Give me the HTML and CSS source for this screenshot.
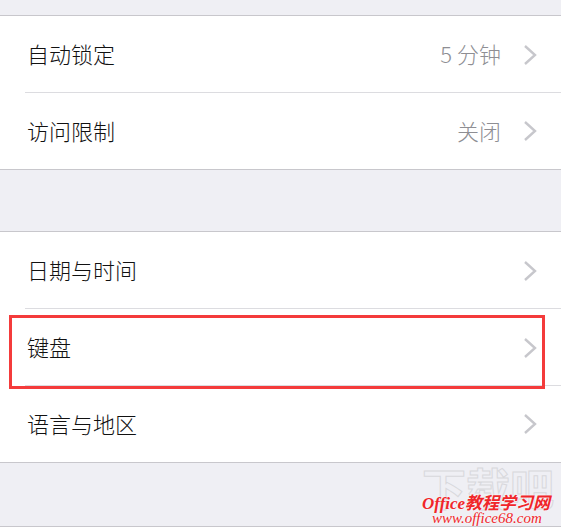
FILE: index.html
```html
<!DOCTYPE html>
<html lang="zh-CN">

<head>
    <meta charset="UTF-8">
    <meta name="viewport" content="width=device-width, initial-scale=1.0">
    <title>通用</title>

    <link rel="stylesheet" href="styles.css">
</head>

<body>

    <!-- First group -->
    <div class="group group-first">
        <div class="row">
            <span class="label">自动锁定</span>
            <span class="value">5 分钟</span>
            <svg class="chevron" width="14" height="22" viewBox="0 0 14 22"><polyline points="2,2 12,11 2,20" /></svg>
        </div>
        <div class="row">
            <span class="label">访问限制</span>
            <span class="value">关闭</span>
            <svg class="chevron" width="14" height="22" viewBox="0 0 14 22"><polyline points="2,2 12,11 2,20" /></svg>
        </div>
    </div>

    <!-- Second group -->
    <div class="group group-second">
        <div class="row">
            <span class="label">日期与时间</span>
            <svg class="chevron" width="14" height="22" viewBox="0 0 14 22"><polyline points="2,2 12,11 2,20" /></svg>
        </div>
        <div class="row highlighted">
            <span class="label">键盘</span>
            <svg class="chevron" width="14" height="22" viewBox="0 0 14 22"><polyline points="2,2 12,11 2,20" /></svg>
        </div>
        <div class="row">
            <span class="label">语言与地区</span>
            <svg class="chevron" width="14" height="22" viewBox="0 0 14 22"><polyline points="2,2 12,11 2,20" /></svg>
        </div>
    </div>

    <div class="group group-third"></div>

    <!-- Watermark -->
    <div class="watermark">
        <div class="wm-big">下载吧</div>
        <div class="wm-name">Office教程学习网</div>
        <div class="wm-url">www.office68.com</div>
    </div>

</body>

</html>
```

FILE: styles.css
```css
*, *::before, *::after {
    margin: 0;
    padding: 0;
    box-sizing: border-box;
}

html, body {
    width: 100%;
    height: 100%;
    overflow: hidden;
}

body {
    position: relative;
    background-color: #efeff4;
    font-family: "Noto Sans CJK SC", "Liberation Sans", sans-serif;
}

/* Groups */
.group {
    background-color: #ffffff;
    border-top: 1px solid #c8c7cc;
    border-bottom: 1px solid #c8c7cc;
}

.group-first {
    margin-top: 15px;
}

.group-second {
    margin-top: 61px;
}

.group-third {
    margin-top: 63px;
    height: 20px;
    border-bottom: none;
}

/* Rows */
.row {
    position: relative;
    height: 77px;
    display: flex;
    align-items: center;
    padding: 0 24px 0 27px;
}

.row:not(:last-child)::after {
    content: "";
    position: absolute;
    left: 25px;
    right: 0;
    bottom: 0;
    height: 1px;
    background-color: #dcdce0;
}

.row:last-child {
    height: 76px;
}

.label {
    flex: 1;
    font-size: 22px;
    font-weight: 300;
    line-height: 1;
    color: #111111;
    margin-top: -3px;
}

.value {
    font-size: 22px;
    font-weight: 300;
    line-height: 1;
    color: #8e8e93;
    margin-right: 22px;
    margin-top: -3px;
}

.chevron polyline {
    fill: none;
    stroke: #c7c7cc;
    stroke-width: 2.4;
}

/* Red highlight box over the keyboard row */
.highlighted::before {
    content: "";
    position: absolute;
    left: 9px;
    top: 6px;
    width: 536px;
    height: 74px;
    border: 3px solid #f43b3b;
    z-index: 2;
}

/* Watermark */
.watermark {
    position: absolute;
    left: 418px;
    top: 462px;
    width: 140px;
    text-align: center;
}

.wm-big {
    font-size: 44px;
    font-weight: bold;
    line-height: 30px;
    padding-top: 10px;
    color: transparent;
    -webkit-text-stroke: 1px #d8d8dc;
}

.wm-name {
    position: absolute;
    left: 4px;
    top: 34px;
    font-family: "Liberation Serif", "Noto Sans CJK SC", serif;
    font-style: italic;
    font-weight: bold;
    font-size: 17px;
    line-height: 16px;
    color: #f0262a;
    white-space: nowrap;
    text-shadow: 0 0 2px #ffffff;
}

.wm-url {
    position: absolute;
    left: 14px;
    top: 50px;
    font-family: "Liberation Serif", serif;
    font-style: italic;
    font-size: 15px;
    line-height: 13px;
    color: #f0262a;
    white-space: nowrap;
    text-shadow: 0 0 2px #ffffff;
}
```
